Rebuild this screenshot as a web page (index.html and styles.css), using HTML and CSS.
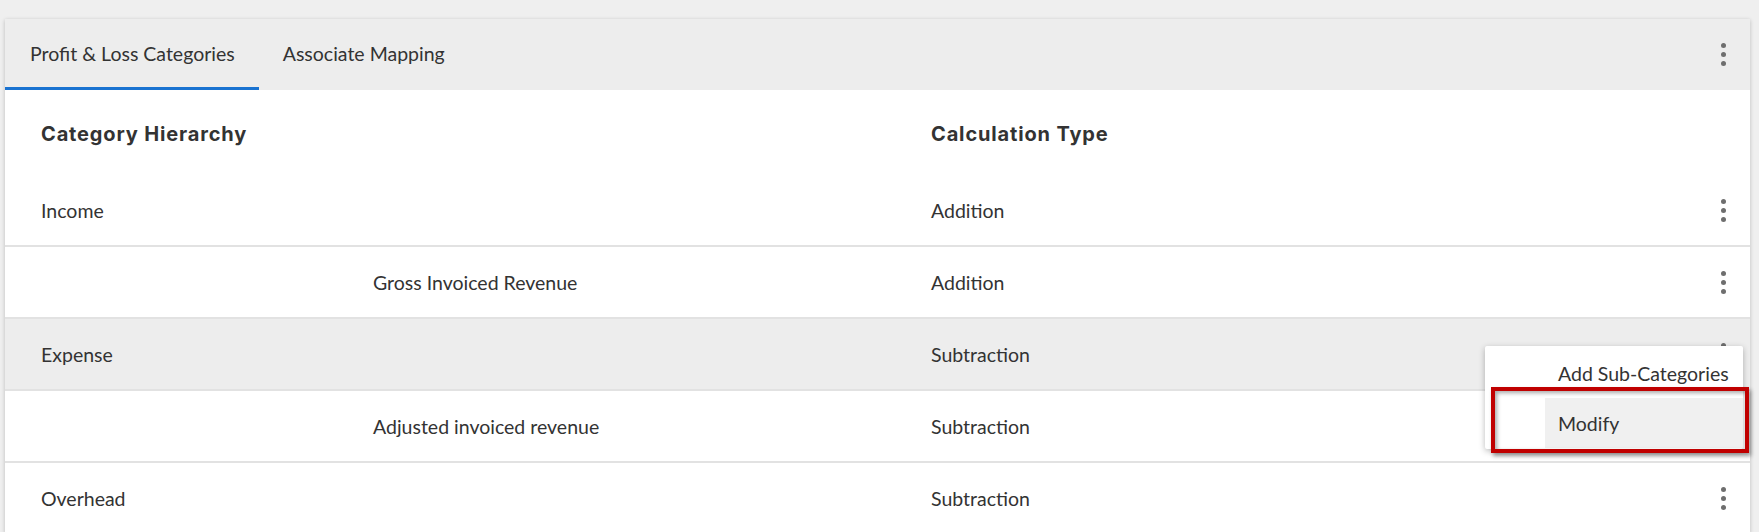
FILE: index.html
```html
<!DOCTYPE html>
<html lang="en">
<head>
<meta charset="utf-8">
<title>Profit &amp; Loss Categories</title>
<link rel="stylesheet" href="styles.css">
</head>
<body>
<div class="card">
  <div class="tabs">
    <div class="tab active">Profit &amp; Loss Categories</div>
    <div class="tab">Associate Mapping</div>
    <div class="tabs-fill"></div>
    <div class="kebab-cell"><span class="kebab"><i></i><i></i><i></i></span></div>
  </div>
  <div class="table">
    <div class="row head">
      <div class="cell">Category Hierarchy</div>
      <div class="cell">Calculation Type</div>
      <div class="cell"></div>
    </div>
    <div class="row">
      <div class="cell">Income</div>
      <div class="cell">Addition</div>
      <div class="kebab-cell"><span class="kebab"><i></i><i></i><i></i></span></div>
    </div>
    <div class="row">
      <div class="cell sub">Gross Invoiced Revenue</div>
      <div class="cell">Addition</div>
      <div class="kebab-cell"><span class="kebab"><i></i><i></i><i></i></span></div>
    </div>
    <div class="row selected">
      <div class="cell">Expense</div>
      <div class="cell">Subtraction</div>
      <div class="kebab-cell"><span class="kebab"><i></i><i></i><i></i></span></div>
      <div class="menu">
        <div class="menu-item">Add Sub-Categories</div>
        <div class="menu-item hover">Modify</div>
      </div>
      <div class="annot"></div>
    </div>
    <div class="row">
      <div class="cell sub">Adjusted invoiced revenue</div>
      <div class="cell">Subtraction</div>
      <div class="kebab-cell"><span class="kebab"><i></i><i></i><i></i></span></div>
    </div>
    <div class="row">
      <div class="cell">Overhead</div>
      <div class="cell">Subtraction</div>
      <div class="kebab-cell"><span class="kebab"><i></i><i></i><i></i></span></div>
    </div>
  </div>
</div>
</body>
</html>
```
FILE: styles.css
```css
html, body {
  margin: 0;
  padding: 0;
}
body {
  background: #efefef;
  font-family: "Lato", "Noto Sans", sans-serif;
  font-size: 19.5px;
  color: #333333;
  height: 532px;
  overflow: hidden;
}
.card {
  margin: 19px 9px 0 5px;
  background: #ffffff;
  box-shadow: 0 1px 4px rgba(0, 0, 0, 0.22);
}
.tabs {
  display: flex;
  align-items: stretch;
  height: 71px;
  background: #ededed;
  padding-right: 7px;
}
.tab {
  display: flex;
  align-items: center;
  padding: 0 24px;
  border-bottom: 3px solid transparent;
  color: #333333;
  white-space: nowrap;
}
.tab.active {
  padding-left: 25px;
  border-bottom-color: #1a73d1;
}
.tabs-fill {
  flex: 1;
}
.kebab-cell {
  width: 40px;
  display: flex;
  align-items: center;
  justify-content: center;
}
.kebab {
  display: flex;
  flex-direction: column;
  gap: 4px;
}
.kebab i {
  display: block;
  width: 5px;
  height: 5px;
  border-radius: 50%;
  background: #6e6e6e;
}
.table {
  display: flex;
  flex-direction: column;
}
.row {
  position: relative;
  display: grid;
  grid-template-columns: 890px 1fr 40px;
  align-items: center;
  height: 70px;
  padding: 0 7px 0 36px;
  border-bottom: 2px solid #e2e2e2;
}
.row:last-child {
  border-bottom: none;
}
.row.head {
  height: 82px;
  padding-top: 3px;
  border-bottom: none;
  font-family: "Inter", "DejaVu Sans", sans-serif;
  font-weight: 700;
  font-size: 20px;
  letter-spacing: 0.85px;
  color: #333333;
}
.row.selected {
  background: #ededed;
}
.cell {
  white-space: nowrap;
}
.cell.sub {
  padding-left: 332px;
}
.kebab-cell {
  height: 100%;
}
.menu {
  position: absolute;
  top: 27px;
  right: 7px;
  width: 258px;
  padding: 2px 0 1px 60px;
  box-sizing: border-box;
  background: #ffffff;
  border-radius: 2px;
  box-shadow: 0 2px 6px rgba(0, 0, 0, 0.28);
  z-index: 2;
}
.menu-item {
  height: 50px;
  display: flex;
  align-items: center;
  padding: 0 13px;
  color: #333333;
  white-space: nowrap;
}
.menu-item.hover {
  background: #f0f0f0;
}
.annot {
  position: absolute;
  top: 68px;
  right: 1px;
  width: 258px;
  height: 66px;
  box-sizing: border-box;
  border: 4px solid #c00000;
  box-shadow: 2px 3px 4px rgba(0, 0, 0, 0.4), inset 2px 2px 4px rgba(0, 0, 0, 0.35);
  z-index: 3;
}
```
